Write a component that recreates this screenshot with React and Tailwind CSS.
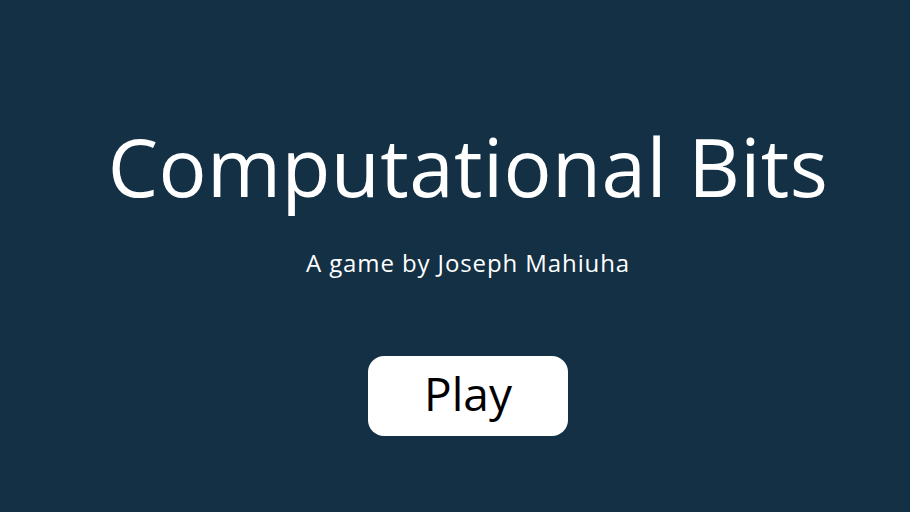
export default function App() {
  return (
    <div className="h-[512px] w-full bg-[#133044] flex flex-col items-center pt-[116px] pl-[26px] font-['Open_Sans',sans-serif] text-white">
      <h1 className="text-[80px] leading-[100px] font-normal tracking-[0.4px]">Computational Bits</h1>
      <p className="mt-[31px] text-[24px] leading-[32px] tracking-[0.9px]">A game by Joseph Mahiuha</p>
      <button className="mt-[77px] w-[200px] h-[80px] pb-[6px] bg-white text-black rounded-[16px] text-[46px] leading-none">
        Play
      </button>
    </div>
  )
}
